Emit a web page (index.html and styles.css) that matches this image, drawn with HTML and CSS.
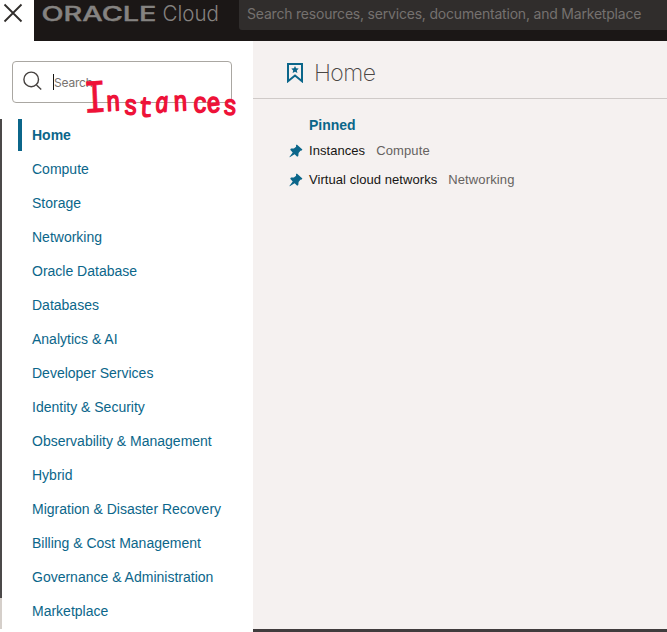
FILE: index.html
```html
<!DOCTYPE html>
<html lang="en">
<head>
<meta charset="utf-8">
<title>Oracle Cloud</title>
<link rel="stylesheet" href="styles.css">
</head>
<body>
<header class="topbar">
  <button class="close" aria-label="Close menu">
    <svg width="20" height="20" viewBox="0 0 20 20"><path d="M1.500 1.500 18.500 18.500M18.500 1.500 1.500 18.500"/></svg>
  </button>
  <div class="masthead">
    <svg class="brand" width="194" height="30" viewBox="0 0 194 30">
      <text class="oracle" x="7.500" y="20.600" textLength="115" lengthAdjust="spacingAndGlyphs">ORACLE</text>
      <text class="cloud" x="128.500" y="21.300" textLength="56.500" lengthAdjust="spacingAndGlyphs">Cloud</text>
    </svg>
    <div class="global-search">Search resources, services, documentation, and Marketplace</div>
  </div>
</header>
<div class="layout">
  <aside class="drawer">
    <div class="search">
      <svg class="lens" width="20" height="20" viewBox="0 0 20 20"><circle cx="8.200" cy="8.400" r="7.300"/><path d="m13.500 14 4.700 4.500"/></svg>
      <span class="caret"></span><span class="placeholder">Search</span>
      <svg class="note" width="160" height="46" viewBox="0 0 160 46">
        <text transform="scale(.84 1)"><tspan class="big" x="1" y="39" rotate="-3">I</tspan><tspan x="28" y="37" rotate="-3">n</tspan><tspan x="48" y="40" rotate="3">s</tspan><tspan x="66" y="42" rotate="3">t</tspan><tspan class="slant" x="87" y="39" rotate="-7">a</tspan><tspan x="108" y="37" rotate="-3">n</tspan><tspan x="131" y="38" rotate="1">c</tspan><tspan x="148" y="39" rotate="-6">e</tspan><tspan x="166" y="40" rotate="4">s</tspan></text>
      </svg>
    </div>
    <nav class="menu">
      <a class="active">Home</a>
      <a>Compute</a>
      <a>Storage</a>
      <a>Networking</a>
      <a>Oracle Database</a>
      <a>Databases</a>
      <a>Analytics &amp; AI</a>
      <a>Developer Services</a>
      <a>Identity &amp; Security</a>
      <a>Observability &amp; Management</a>
      <a>Hybrid</a>
      <a>Migration &amp; Disaster Recovery</a>
      <a>Billing &amp; Cost Management</a>
      <a>Governance &amp; Administration</a>
      <a>Marketplace</a>
    </nav>
  </aside>
  <main class="content">
    <div class="title">
      <svg width="16" height="20" viewBox="0 0 16 20"><path class="ribbon" d="M1 1h14v17.200l-7-5.700-7 5.700z"/><path class="star" d="m8 3 1.100 2.300 2.600.3-1.900 1.800.6 2.700L8 8.800 5.600 10.100l.6-2.700-1.900-1.800L6.900 5.300z"/></svg>
      <h1>Home</h1>
    </div>
    <h2>Pinned</h2>
    <ul class="pins">
      <li><svg width="14" height="14" viewBox="0 0 14 14"><path d="M7.800.5 13.400 5.500 12.700 6.600 11.400 6.700 9.600 9 9.300 12 8.200 12.700 5.600 10.200.7 13.300.4 12.900 3.700 8.400 1.200 5.700 2 4.600 4.900 4.500 7.100 2.800 7 1.200z"/></svg><b>Instances</b><span>Compute</span></li>
      <li><svg width="14" height="14" viewBox="0 0 14 14"><path d="M7.800.5 13.400 5.500 12.700 6.600 11.400 6.700 9.600 9 9.300 12 8.200 12.700 5.600 10.200.7 13.300.4 12.900 3.700 8.400 1.200 5.700 2 4.600 4.900 4.500 7.100 2.800 7 1.200z"/></svg><b>Virtual cloud networks</b><span>Networking</span></li>
    </ul>
  </main>
</div>
</body>
</html>
```

FILE: styles.css
```css
* { box-sizing: border-box; }
body {
  margin: 0;
  width: 667px;
  height: 632px;
  overflow: hidden;
  background: #fff;
  font-family: "Liberation Sans", Arial, sans-serif;
}
svg { display: block; flex: none; }

.topbar { display: flex; height: 41px; }
.close {
  display: flex;
  align-items: flex-start;
  width: 34px;
  padding: 3px 0 0 3px;
  border: 0;
  background: #fff;
}
.close path { stroke: #302d2b; stroke-width: 1.8; }
.masthead { display: flex; flex: 1; min-width: 0; background: #1b1716; }
.brand { margin-right: 11px; }
.oracle { font: 500 19.500px Inter, sans-serif; fill: #858381; stroke: #858381; stroke-width: .4; }
.cloud { font: 300 22px Inter, sans-serif; fill: #858280; }
.global-search {
  flex: 1;
  min-width: 0;
  height: 30px;
  padding-left: 8px;
  border-radius: 0 0 0 3px;
  background: #302d2c;
  color: #75716f;
  font: 14px/28px Inter, sans-serif;
  letter-spacing: -.2px;
  white-space: nowrap;
}

.layout { display: flex; height: 591px; }
.drawer { width: 253px; padding-top: 20px; background: #fff; }
.search {
  position: relative;
  display: flex;
  align-items: center;
  width: 220px;
  height: 42px;
  margin-left: 12px;
  padding-left: 10px;
  border: 1px solid #aaa7a2;
  border-radius: 4px;
}
.lens { margin-top: -2px; fill: none; stroke: #45413f; stroke-width: 1.4; }
.caret { width: 1px; height: 16px; margin-left: 10px; background: #161513; }
.placeholder { color: #77736f; font: 12px Inter, sans-serif; letter-spacing: -.2px; }
.note { position: absolute; left: 70px; top: 12px; overflow: visible; }
.note text {
  fill: #ee1238;
  stroke: #ee1238;
  stroke-width: 1.6;
  stroke-linejoin: round;
  font: 400 28px "Liberation Mono", monospace;
}
.note .big { font-size: 47px; stroke-width: .6; }
.note .slant { font: italic 400 28px "Open Sans", sans-serif; }

.menu {
  height: 510px;
  margin-top: 16px;
  border-left: 2px solid;
  border-image: linear-gradient(#4b4949 478px, #d5cfca 478px) 1;
  border-image-width: 0 0 0 2px;
}
.menu a {
  display: block;
  height: 34px;
  padding-left: 30px;
  color: #0b668a;
  font-size: 14px;
  line-height: 34px;
  white-space: nowrap;
}
.menu .active {
  height: 32px;
  margin: 0 0 1px 16px;
  padding-left: 10px;
  border-left: 4px solid #0b668a;
  font-weight: 700;
  line-height: 33px;
}

.content { flex: 1; height: 591px; background: #f5f1f0; border-bottom: 3px solid #403c3d; }
.title {
  display: flex;
  height: 58px;
  padding: 22px 0 0 34px;
  border-bottom: 1px solid #cfcac8;
}
.ribbon { fill: none; stroke: #0b668a; stroke-width: 2; }
.star { fill: #0b668a; }
h1 {
  margin: -4px 0 0 11px;
  color: #4a4644;
  font: 200 23px/28px Inter, sans-serif;
  letter-spacing: -.6px;
}
h2 { margin: 17px 0 0 56px; color: #0b668a; font-size: 14px; line-height: 18px; }
.pins { margin: 2px 0 0; padding: 0 0 0 36px; list-style: none; }
.pins li { display: flex; align-items: center; height: 29px; font-size: 13px; }
.pins svg { margin-right: 6px; fill: #0b668a; }
.pins b { color: #161513; font-weight: 400; letter-spacing: .06px; }
.pins span { margin-left: 11px; color: #66625f; letter-spacing: .12px; }
```
